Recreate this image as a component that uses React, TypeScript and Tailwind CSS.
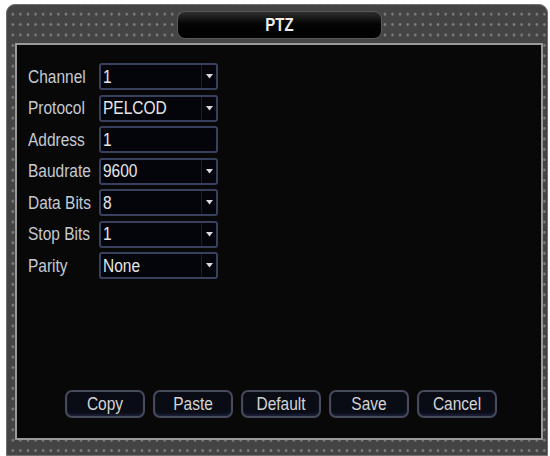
import React from "react";

const FONT = "font-['Liberation_Sans','Arial',sans-serif]";
const TXT = "inline-block whitespace-nowrap origin-center scale-y-[1.18]";

const rows: { label: string; value: string; dropdown: boolean }[] = [
  { label: "Channel", value: "1", dropdown: true },
  { label: "Protocol", value: "PELCOD", dropdown: true },
  { label: "Address", value: "1", dropdown: false },
  { label: "Baudrate", value: "9600", dropdown: true },
  { label: "Data Bits", value: "8", dropdown: true },
  { label: "Stop Bits", value: "1", dropdown: true },
  { label: "Parity", value: "None", dropdown: true },
];

const buttons = ["Copy", "Paste", "Default", "Save", "Cancel"];

function Arrow() {
  return (
    <svg width="7" height="5" viewBox="0 0 7 5" className="block">
      <polygon points="0,0 7,0 3.5,4.5" fill="#d8dbe2" />
    </svg>
  );
}

function Field({ value, dropdown }: { value: string; dropdown: boolean }) {
  return (
    <div className="flex h-[27px] w-[119px] items-center rounded-[3px] border-2 border-[#39405e] bg-[#04050a]">
      <span className="flex-1 pl-[2px] text-[15.5px] leading-none text-[#e6e6e6]">
        <span className={TXT}>{value}</span>
      </span>
      {dropdown && (
        <div className="flex h-full w-[15px] items-center justify-center border-l border-[#1a1e30]">
          <Arrow />
        </div>
      )}
    </div>
  );
}

export default function App() {
  return (
    <div className={`flex h-[456px] w-[550px] bg-white pl-[6px] pr-[2px] pt-[4px] ${FONT}`}>
      <div className="flex flex-1 flex-col rounded-t-[9px] border border-[#707070] bg-[#444444] bg-[radial-gradient(circle_at_center,#7c7c7c_1.1px,transparent_1.7px)] bg-[length:7.6px_10.4px] bg-[position:2px_4px]">
        <div className="flex h-[38px] items-center justify-center pl-[5px] pt-[1px]">
          <div className="flex h-[28px] w-[205px] items-center justify-center rounded-[8px] border border-[#5a5a5a] bg-[linear-gradient(to_bottom,#2e2e2e,#050505_45%,#000000)]">
            <span className="text-[15px] font-bold leading-none text-[#ececec]">
              <span className={TXT}>PTZ</span>
            </span>
          </div>
        </div>
        <div className="ml-[8px] mr-[4px] flex h-[397px] flex-col border-2 border-[#9a9a9a] bg-[#080808]">
          <div className="ml-[11px] mt-[18px] flex flex-col gap-[4.5px]">
            {rows.map((r) => (
              <div key={r.label} className="flex items-center">
                <span className="w-[71px] text-[15.5px] leading-none text-[#c6cad2]">
                  <span className={TXT}>{r.label}</span>
                </span>
                <Field value={r.value} dropdown={r.dropdown} />
              </div>
            ))}
          </div>
          <div className="mb-[20px] ml-[48px] mt-auto flex gap-[8px]">
            {buttons.map((b) => (
              <div
                key={b}
                className="flex h-[28px] w-[80px] items-center justify-center rounded-[7px] border-2 border-[#464b5c] bg-[#0a0c15] text-[15.5px] leading-none text-[#d4d4d4] shadow-[inset_0_-2px_2px_rgba(60,70,120,0.35)]"
              >
                <span className={TXT}>{b}</span>
              </div>
            ))}
          </div>
        </div>
        <div className="flex-1" />
      </div>
    </div>
  );
}
